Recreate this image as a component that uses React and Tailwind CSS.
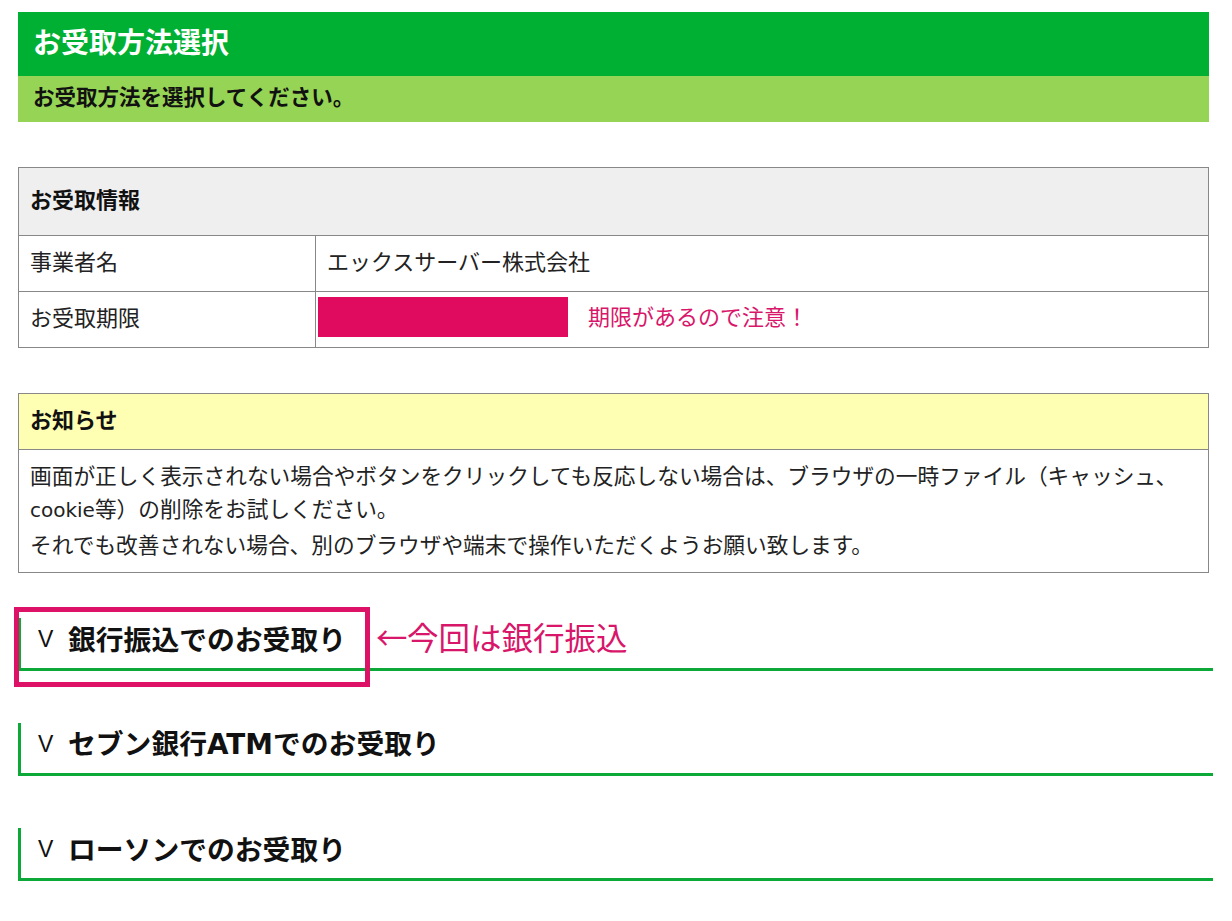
const font = { fontFamily: '"Noto Sans CJK JP", "Liberation Sans", sans-serif' }
const latin = { fontFamily: '"DejaVu Sans", sans-serif' }

const methods = [
	{ id: 1, label: <>銀行振込でのお受取り</>, marked: true },
	{ id: 2, label: <>セブン銀行<span style={latin}>ATM</span>でのお受取り</> },
	{ id: 3, label: <>ローソンでのお受取り</> },
]

const MethodHeading = ({ label, marked }) => (
	<div className="relative mr-[-4px] h-[53px] border-b-[3px] border-l-[3px] border-[#0ca838] text-[#111]">
		<div className="flex h-full items-center pb-[8px] pl-[17px]">
			<span className="w-[30px] text-[23px] leading-none" style={{ fontFamily: '"Liberation Sans", sans-serif' }}>V</span>
			<span className="text-[27.8px] font-bold leading-none">{label}</span>
		</div>
		{marked && (
			<>
				{/* 注釈の枠 */}
				<div className="absolute left-[-7px] top-[-11px] h-[80px] w-[356px] border-[5px] border-[#dd1166]" />
				<span className="absolute left-[355px] top-[3px] flex items-center text-[31.5px] leading-none text-[#d8166a]">
					<span className="inline-block w-[31px] text-center">←</span>今回は銀行振込
				</span>
			</>
		)}
	</div>
)

export default function App() {
	return (
		<div className="min-h-screen bg-white pt-[12px] pl-[18px] pr-[23px] pb-10" style={font}>
			{/* Header */}
			<div className="flex h-[64px] items-center bg-[#00b033] pb-[6px] pl-[15px] text-[28px] font-bold text-white">
				お受取方法選択
			</div>
			<div className="flex h-[46px] items-center bg-[#96d455] pb-[6px] pl-[15px] text-[21.5px] font-bold text-[#111]">
				お受取方法を選択してください。
			</div>

			{/* お受取情報 */}
			<div className="mt-[45px] border border-[#888] text-[22px] text-[#222]">
				<div className="flex h-[67px] items-center bg-[#efefef] pb-[7px] pl-[11px] font-bold text-[#111]">お受取情報</div>
				<div className="grid h-[56px] grid-cols-[297px_1fr] border-t border-[#888]">
					<div className="flex items-center border-r border-[#888] pb-[7px] pl-[11px]">事業者名</div>
					<div className="flex items-center pb-[7px] pl-[11px]">エックスサーバー株式会社</div>
				</div>
				<div className="grid h-[56px] grid-cols-[297px_1fr] border-t border-[#888]">
					<div className="flex items-center border-r border-[#888] pb-[7px] pl-[11px]">お受取期限</div>
					<div className="flex items-start pl-[2px] pt-[5px]">
						<div className="h-[40px] w-[250px] bg-[#e00b5f]" />
						<span className="ml-[20px] mt-[4px] leading-[28px] text-[#d8166a]">期限があるので注意！</span>
					</div>
				</div>
			</div>

			{/* お知らせ */}
			<div className="mt-[45px] border border-[#888] text-[#222]">
				<div className="flex h-[55px] items-center bg-[#ffffb4] pb-[6px] pl-[11px] text-[22px] font-bold text-[#111]">お知らせ</div>
				<div className="border-t border-[#888] px-[11px] pt-[8px] pb-[12px] text-[21.7px] leading-[33px]">
					画面が正しく表示されない場合やボタンをクリックしても反応しない場合は、ブラウザの一時ファイル（キャッシュ、<br />
					<span style={latin} className="text-[20px]">cookie</span>等）の削除をお試しください。<br />
					それでも改善されない場合、別のブラウザや端末で操作いただくようお願い致します。
				</div>
			</div>

			{/* 受取方法 */}
			<div className="mt-[45px] flex flex-col gap-[52px]">
				{methods.map((m) => (
					<MethodHeading key={m.id} label={m.label} marked={m.marked} />
				))}
			</div>
		</div>
	)
}
